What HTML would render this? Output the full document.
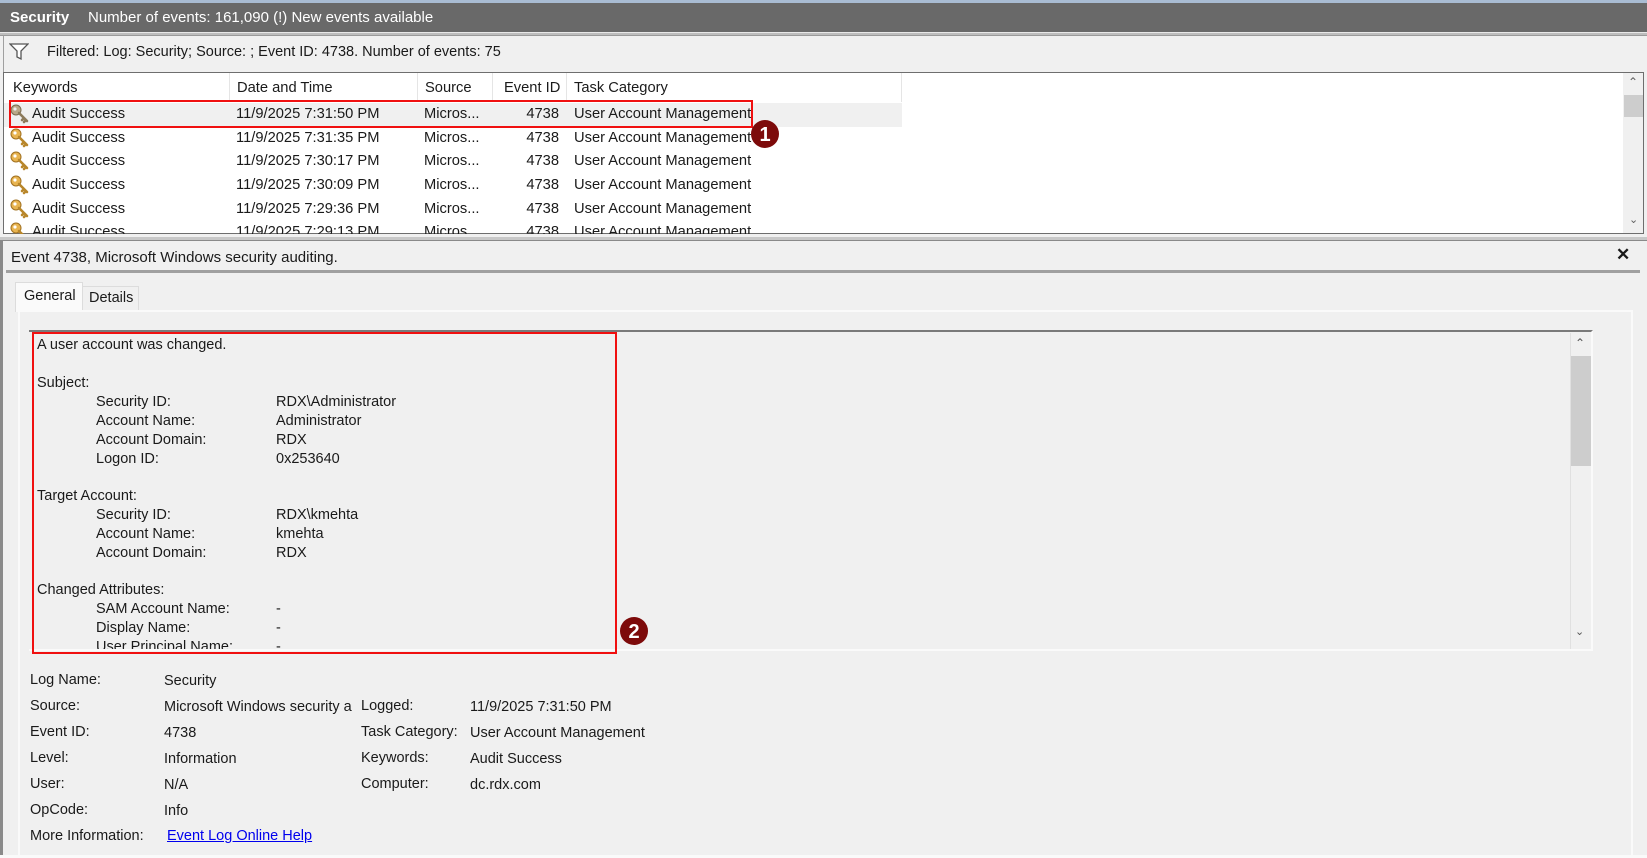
<!DOCTYPE html>
<html><head><meta charset="utf-8"><style>
*{margin:0;padding:0;box-sizing:border-box}
body{width:1647px;height:858px;overflow:hidden;background:#f0f0f0;font-family:"Liberation Sans",sans-serif;color:#1a1a1a;position:relative}
.a{position:absolute;white-space:nowrap}
.lst{font-size:14.7px}
.tb{font-size:14.5px}
.bt{font-size:14.5px}
.id{width:60px;text-align:right}
</style></head><body>
<svg width="0" height="0" style="position:absolute"><defs><g id="k"><circle cx="6" cy="6" r="5" fill="#e8b450" stroke="#a07020" stroke-width="1"/><circle cx="5" cy="5" r="1.6" fill="#fff"/><path d="M9 9L17 17M14 14L12 16M16 16L14 18" stroke="#b8862a" stroke-width="2.6" stroke-linecap="round"/></g><g id="kg"><circle cx="6" cy="6" r="5" fill="#b9a888" stroke="#7a6a50" stroke-width="1"/><circle cx="5" cy="5" r="1.6" fill="#eee"/><path d="M9 9L17 17M14 14L12 16M16 16L14 18" stroke="#8c7a5a" stroke-width="2.6" stroke-linecap="round"/></g></defs></svg>
<!-- title bar -->
<div class="a" style="left:0;top:0;width:1647px;height:3px;background:#a9bcd3"></div>
<div class="a" style="left:0;top:3px;width:1647px;height:29px;background:#696969"></div>
<div class="a" style="left:10px;top:9px;color:#fff;font-size:15px;font-weight:bold">Security</div>
<div class="a" style="left:88px;top:9px;color:#fff;font-size:15px">Number of events: 161,090 (!) New events available</div>
<div class="a" style="left:0;top:32px;width:1647px;height:4px;background:#bdbdbd;border-top:1px solid #e8e8e8;border-bottom:1px solid #9a9a9a"></div>
<!-- filter bar -->
<div class="a" style="left:3px;top:36px;width:1644px;height:36px;background:#f0f0f0;border-left:1px solid #a0a0a0"></div>
<svg class="a" style="left:9px;top:43px" width="20" height="18" viewBox="0 0 20 18"><path d="M1 1H19L12 8V16L8 14V8Z" fill="#fff" stroke="#555" stroke-width="1.3"/></svg>
<div class="a" style="left:47px;top:44px;font-size:14.5px">Filtered: Log: Security; Source: ; Event ID: 4738. Number of events: 75</div>
<!-- list -->
<div class="a" style="left:3px;top:72px;width:1641px;height:162px;background:#fff;border:1px solid #6e6e6e;overflow:hidden">
 <div class="a" style="left:225px;top:0;width:1px;height:29px;background:#e5e5e5"></div>
 <div class="a" style="left:413px;top:0;width:1px;height:29px;background:#e5e5e5"></div>
 <div class="a" style="left:488px;top:0;width:1px;height:29px;background:#e5e5e5"></div>
 <div class="a" style="left:562px;top:0;width:1px;height:29px;background:#e5e5e5"></div>
 <div class="a" style="left:897px;top:0;width:1px;height:29px;background:#e5e5e5"></div>
 <div class="a lst" style="left:9px;top:7px">Keywords</div>
 <div class="a lst" style="left:233px;top:7px">Date and Time</div>
 <div class="a lst" style="left:421px;top:7px">Source</div>
 <div class="a lst" style="left:500px;top:7px">Event ID</div>
 <div class="a lst" style="left:570px;top:7px">Task Category</div>
 <div class="a" style="left:0;top:30px;width:898px;height:24px;background:#f0f0f0"></div>
 <div class="a" style="left:1619px;top:0;width:21px;height:160px;background:#f0f0f0"></div>
 <div class="a" style="left:1620px;top:22px;width:20px;height:22px;background:#cdcdcd"></div>
 <div class="a" style="left:1624px;top:2px;font-size:12px;color:#606060">&#8963;</div>
 <div class="a" style="left:1625px;top:140px;font-size:11px;color:#606060">&#8964;</div>
</div>
<div class="a" style="left:4px;top:101px;width:900px;height:133px;overflow:hidden">
 <svg class="a" style="left:6px;top:3px" width="20" height="20"><use href="#kg"/></svg>
 <div class="a lst" style="left:28px;top:5px">Audit Success</div><div class="a lst" style="left:232px;top:5px">11/9/2025 7:31:50 PM</div><div class="a lst" style="left:420px;top:5px">Micros...</div><div class="a lst id" style="left:495px;top:5px">4738</div><div class="a lst" style="left:570px;top:5px">User Account Management</div>
 <svg class="a" style="left:6px;top:27px" width="20" height="20"><use href="#k"/></svg>
 <div class="a lst" style="left:28px;top:29px">Audit Success</div><div class="a lst" style="left:232px;top:29px">11/9/2025 7:31:35 PM</div><div class="a lst" style="left:420px;top:29px">Micros...</div><div class="a lst id" style="left:495px;top:29px">4738</div><div class="a lst" style="left:570px;top:29px">User Account Management</div>
 <svg class="a" style="left:6px;top:50px" width="20" height="20"><use href="#k"/></svg>
 <div class="a lst" style="left:28px;top:52px">Audit Success</div><div class="a lst" style="left:232px;top:52px">11/9/2025 7:30:17 PM</div><div class="a lst" style="left:420px;top:52px">Micros...</div><div class="a lst id" style="left:495px;top:52px">4738</div><div class="a lst" style="left:570px;top:52px">User Account Management</div>
 <svg class="a" style="left:6px;top:74px" width="20" height="20"><use href="#k"/></svg>
 <div class="a lst" style="left:28px;top:76px">Audit Success</div><div class="a lst" style="left:232px;top:76px">11/9/2025 7:30:09 PM</div><div class="a lst" style="left:420px;top:76px">Micros...</div><div class="a lst id" style="left:495px;top:76px">4738</div><div class="a lst" style="left:570px;top:76px">User Account Management</div>
 <svg class="a" style="left:6px;top:98px" width="20" height="20"><use href="#k"/></svg>
 <div class="a lst" style="left:28px;top:100px">Audit Success</div><div class="a lst" style="left:232px;top:100px">11/9/2025 7:29:36 PM</div><div class="a lst" style="left:420px;top:100px">Micros...</div><div class="a lst id" style="left:495px;top:100px">4738</div><div class="a lst" style="left:570px;top:100px">User Account Management</div>
 <svg class="a" style="left:6px;top:121px" width="20" height="20"><use href="#k"/></svg>
 <div class="a lst" style="left:28px;top:123px">Audit Success</div><div class="a lst" style="left:232px;top:123px">11/9/2025 7:29:13 PM</div><div class="a lst" style="left:420px;top:123px">Micros...</div><div class="a lst id" style="left:495px;top:123px">4738</div><div class="a lst" style="left:570px;top:123px">User Account Management</div>
</div>
<!-- red box 1 -->
<div class="a" style="left:9px;top:100px;width:744px;height:28px;border:2px solid #f01010"></div>
<svg class="a" style="left:750px;top:119px" width="30" height="30"><circle cx="15" cy="15" r="14" fill="#7d0a0a"/><text x="15" y="22" text-anchor="middle" fill="#fff" font-family="Liberation Sans" font-weight="bold" font-size="20">1</text></svg>
<!-- splitter -->
<div class="a" style="left:0;top:237px;width:1647px;height:4px;background:#c8c8c8;border-bottom:1px solid #8a8a8a"></div>
<div class="a" style="left:0;top:240px;width:3px;height:618px;background:#8a8a8a"></div>
<!-- event header -->
<div class="a" style="left:11px;top:249px;font-size:15px">Event 4738, Microsoft Windows security auditing.</div>
<div class="a" style="left:1616px;top:245px;font-size:17px;font-weight:bold">✕</div>
<div class="a" style="left:6px;top:270px;width:1634px;height:3px;background:#a0a0a0"></div>
<!-- tabs -->
<div class="a" style="left:15px;top:282px;width:68px;height:30px;background:#fafafa;border:1px solid #dcdcdc;border-bottom:none"></div>
<div class="a" style="left:24px;top:288px;font-size:14.5px">General</div>
<div class="a" style="left:83px;top:286px;width:56px;height:25px;border:1px solid #dcdcdc;border-bottom:none;border-left:none"></div>
<div class="a" style="left:89px;top:290px;font-size:14.5px">Details</div>
<div class="a" style="left:18px;top:310px;width:1615px;height:545px;border:2px solid #fafafa;border-bottom:none"></div>
<!-- text box -->
<div class="a" style="left:29px;top:330px;width:1564px;height:321px;background:#f0f0f0;border-top:2px solid #7a7a7a;border-right:2px solid #fafafa;border-bottom:2px solid #fafafa"></div>
<div class="a" style="left:1570px;top:333px;width:21px;height:316px;background:#f0f0f0;border-left:1px solid #e0e0e0"></div>
<div class="a" style="left:1571px;top:356px;width:20px;height:110px;background:#cdcdcd"></div>
<div class="a" style="left:1575px;top:336px;font-size:12px;color:#555">&#8963;</div>
<div class="a" style="left:1575px;top:625px;font-size:11px;color:#555">&#8964;</div>
<div class="a tb" style="left:37px;top:337px">A user account was changed.</div>
<div class="a tb" style="left:37px;top:375px">Subject:</div>
<div class="a tb" style="left:96px;top:394px">Security ID:</div><div class="a tb" style="left:276px;top:394px">RDX\Administrator</div>
<div class="a tb" style="left:96px;top:413px">Account Name:</div><div class="a tb" style="left:276px;top:413px">Administrator</div>
<div class="a tb" style="left:96px;top:432px">Account Domain:</div><div class="a tb" style="left:276px;top:432px">RDX</div>
<div class="a tb" style="left:96px;top:451px">Logon ID:</div><div class="a tb" style="left:276px;top:451px">0x253640</div>
<div class="a tb" style="left:37px;top:488px">Target Account:</div>
<div class="a tb" style="left:96px;top:507px">Security ID:</div><div class="a tb" style="left:276px;top:507px">RDX\kmehta</div>
<div class="a tb" style="left:96px;top:526px">Account Name:</div><div class="a tb" style="left:276px;top:526px">kmehta</div>
<div class="a tb" style="left:96px;top:545px">Account Domain:</div><div class="a tb" style="left:276px;top:545px">RDX</div>
<div class="a tb" style="left:37px;top:582px">Changed Attributes:</div>
<div class="a tb" style="left:96px;top:601px">SAM Account Name:</div><div class="a tb" style="left:276px;top:601px">-</div>
<div class="a tb" style="left:96px;top:620px">Display Name:</div><div class="a tb" style="left:276px;top:620px">-</div>
<div class="a" style="left:31px;top:640px;width:600px;height:9px;overflow:hidden"><div class="a tb" style="left:65px;top:-1px">User Principal Name:</div><div class="a tb" style="left:245px;top:-1px">-</div></div>
<div class="a" style="left:32px;top:332px;width:585px;height:322px;border:2px solid #f01010"></div>
<svg class="a" style="left:619px;top:616px" width="30" height="30"><circle cx="15" cy="15" r="14" fill="#7d0a0a"/><text x="15" y="22" text-anchor="middle" fill="#fff" font-family="Liberation Sans" font-weight="bold" font-size="20">2</text></svg>
<!-- bottom fields -->
<div class="a bt" style="left:30px;top:672px">Log Name:</div><div class="a bt" style="left:164px;top:673px">Security</div>
<div class="a bt" style="left:30px;top:698px">Source:</div><div class="a bt" style="left:164px;top:699px;width:188px;overflow:hidden">Microsoft Windows security auditing.</div>
<div class="a bt" style="left:361px;top:698px">Logged:</div><div class="a bt" style="left:470px;top:699px">11/9/2025 7:31:50 PM</div>
<div class="a bt" style="left:30px;top:724px">Event ID:</div><div class="a bt" style="left:164px;top:725px">4738</div>
<div class="a bt" style="left:361px;top:724px">Task Category:</div><div class="a bt" style="left:470px;top:725px">User Account Management</div>
<div class="a bt" style="left:30px;top:750px">Level:</div><div class="a bt" style="left:164px;top:751px">Information</div>
<div class="a bt" style="left:361px;top:750px">Keywords:</div><div class="a bt" style="left:470px;top:751px">Audit Success</div>
<div class="a bt" style="left:30px;top:776px">User:</div><div class="a bt" style="left:164px;top:777px">N/A</div>
<div class="a bt" style="left:361px;top:776px">Computer:</div><div class="a bt" style="left:470px;top:777px">dc.rdx.com</div>
<div class="a bt" style="left:30px;top:802px">OpCode:</div><div class="a bt" style="left:164px;top:803px">Info</div>
<div class="a bt" style="left:30px;top:828px">More Information:</div><div class="a bt" style="left:167px;top:828px;color:#0000ee;text-decoration:underline">Event Log Online Help</div>
<div class="a" style="left:0;top:855px;width:1647px;height:3px;background:#fafafa"></div>
</body></html>
